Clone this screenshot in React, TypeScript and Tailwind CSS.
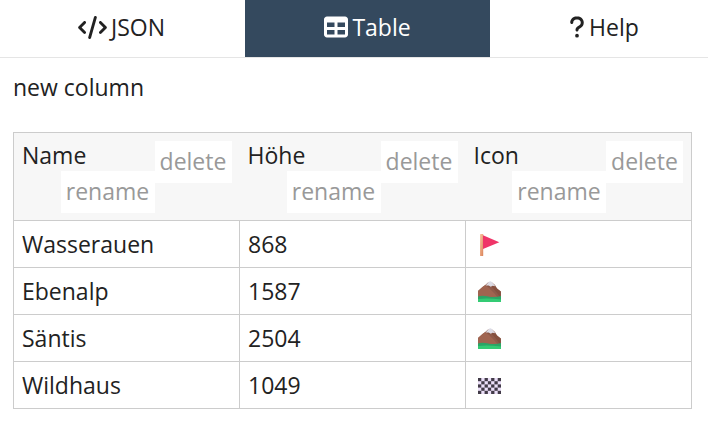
import type { ReactNode } from "react";
import { FaCode, FaQuestion, FaTable } from "react-icons/fa6";

function Flag() {
  return (
    <svg viewBox="0 0 24 24" className="ml-[3px] h-6 w-6" role="img" aria-label="flag">
      <defs>
        <linearGradient id="pole" x1="0" y1="0" x2="1" y2="1">
          <stop offset="0" stopColor="#fbc8a4" />
          <stop offset="1" stopColor="#d98259" />
        </linearGradient>
      </defs>
      <rect x="3" y="2" width="3.2" height="22" rx="0.6" fill="url(#pole)" />
      <path d="M6 3.2 22.3 10.2 6 17Z" fill="#ef3568" />
    </svg>
  );
}

function Mountain() {
  return (
    <svg viewBox="0 0 24 24" className="ml-[3px] h-6 w-6" role="img" aria-label="mountain">
      <path d="M1 12 5.5 8 8.5 5.8 11 3.5 15 3.5 18 6 20 9.5 24 12.5V21H1Z" fill="#8f5a4a" />
      <path d="M5.5 8 8.5 6 12 9 17.5 14.5 22 20 8 17.5 1 18V12Z" fill="#a06450" />
      <path d="M9 7 15 8 20 14 23.5 19V12.5L20 9.5 17 6Z" fill="#85503f" />
      <path d="M8.6 6.4 12 2.8Q13.3 1.6 14.8 2.9L18.4 7.2 15.6 6.8 13.8 7.8 11.6 6.6Z" fill="#dcdce6" />
      <path d="M1 17.4Q5 16.2 10 17.2 18 19 24 17V23H1Z" fill="#2ba566" />
      <path d="M1 20Q10 18.6 24 20.4V23H1Z" fill="#34cb74" />
    </svg>
  );
}

const CHECKS = Array.from({ length: 35 }, (_, i) => ({ x: i % 7, y: Math.floor(i / 7) })).filter(
  (c) => (c.x + c.y) % 2 === 0,
);

function Chequered() {
  return (
    <svg viewBox="0 0 24 24" className="ml-[3px] h-6 w-6" role="img" aria-label="chequered flag">
      <rect x="1" y="5" width="23" height="16" fill="#ebdff8" />
      {CHECKS.map((c) => (
        <rect key={`${c.x}-${c.y}`} x={1 + c.x * 3.286} y={5 + c.y * 3.2} width="3.286" height="3.2" fill="#423b48" />
      ))}
    </svg>
  );
}

const COLUMNS = ["Name", "Höhe", "Icon"];

const ROWS: { name: string; height: number; icon: ReactNode }[] = [
  { name: "Wasserauen", height: 868, icon: <Flag /> },
  { name: "Ebenalp", height: 1587, icon: <Mountain /> },
  { name: "Säntis", height: 2504, icon: <Mountain /> },
  { name: "Wildhaus", height: 1049, icon: <Chequered /> },
];

export default function App() {
  return (
    <div className="bg-white font-['Open_Sans','Noto_Sans',sans-serif] text-[23px] leading-[30px] text-[#222]">
      <nav className="grid grid-cols-[245fr_245fr_218fr] border-b border-[#e5e5e5]">
        <button className="flex h-[57px] items-center justify-center gap-1 pr-[2px] pb-[3px]">
          <FaCode className="h-[23px] w-[29px]" />
          JSON
        </button>
        <button className="flex h-[57px] items-center justify-center gap-1 bg-[#34495e] pb-[3px] text-white">
          <FaTable className="size-6" />
          Table
        </button>
        <button className="flex h-[57px] items-center justify-center gap-1 pb-[3px] pl-[10px]">
          <FaQuestion className="h-6 w-4" />
          Help
        </button>
      </nav>
      <main className="pt-[14px] pr-4 pl-[13px]">
        <button className="block">new column</button>
        <table className="mt-[30px] w-full table-fixed border-collapse border border-[#ccc]">
          <thead>
            <tr className="border-b border-[#ccc] bg-[#f7f7f7]">
              {COLUMNS.map((column) => (
                <th key={column} scope="col" className="px-2 pt-2 pb-[7px] text-left align-top leading-7 font-normal">
                  <div className="flex items-start justify-between">
                    {column}
                    <button className="h-[42px] w-[77px] bg-white pb-[2px] text-[#999]">delete</button>
                  </div>
                  <div className="-mt-3 flex justify-end pr-[77px]">
                    <button className="h-[42px] w-[94px] bg-white pb-[2px] text-[#999]">rename</button>
                  </div>
                </th>
              ))}
            </tr>
          </thead>
          <tbody>
            {ROWS.map((row) => (
              <tr key={row.name}>
                <td className="h-[47px] border border-[#ccc] px-2">{row.name}</td>
                <td className="h-[47px] border border-[#ccc] px-2">{row.height}</td>
                <td className="h-[47px] border border-[#ccc] px-2">{row.icon}</td>
              </tr>
            ))}
          </tbody>
        </table>
      </main>
    </div>
  );
}
